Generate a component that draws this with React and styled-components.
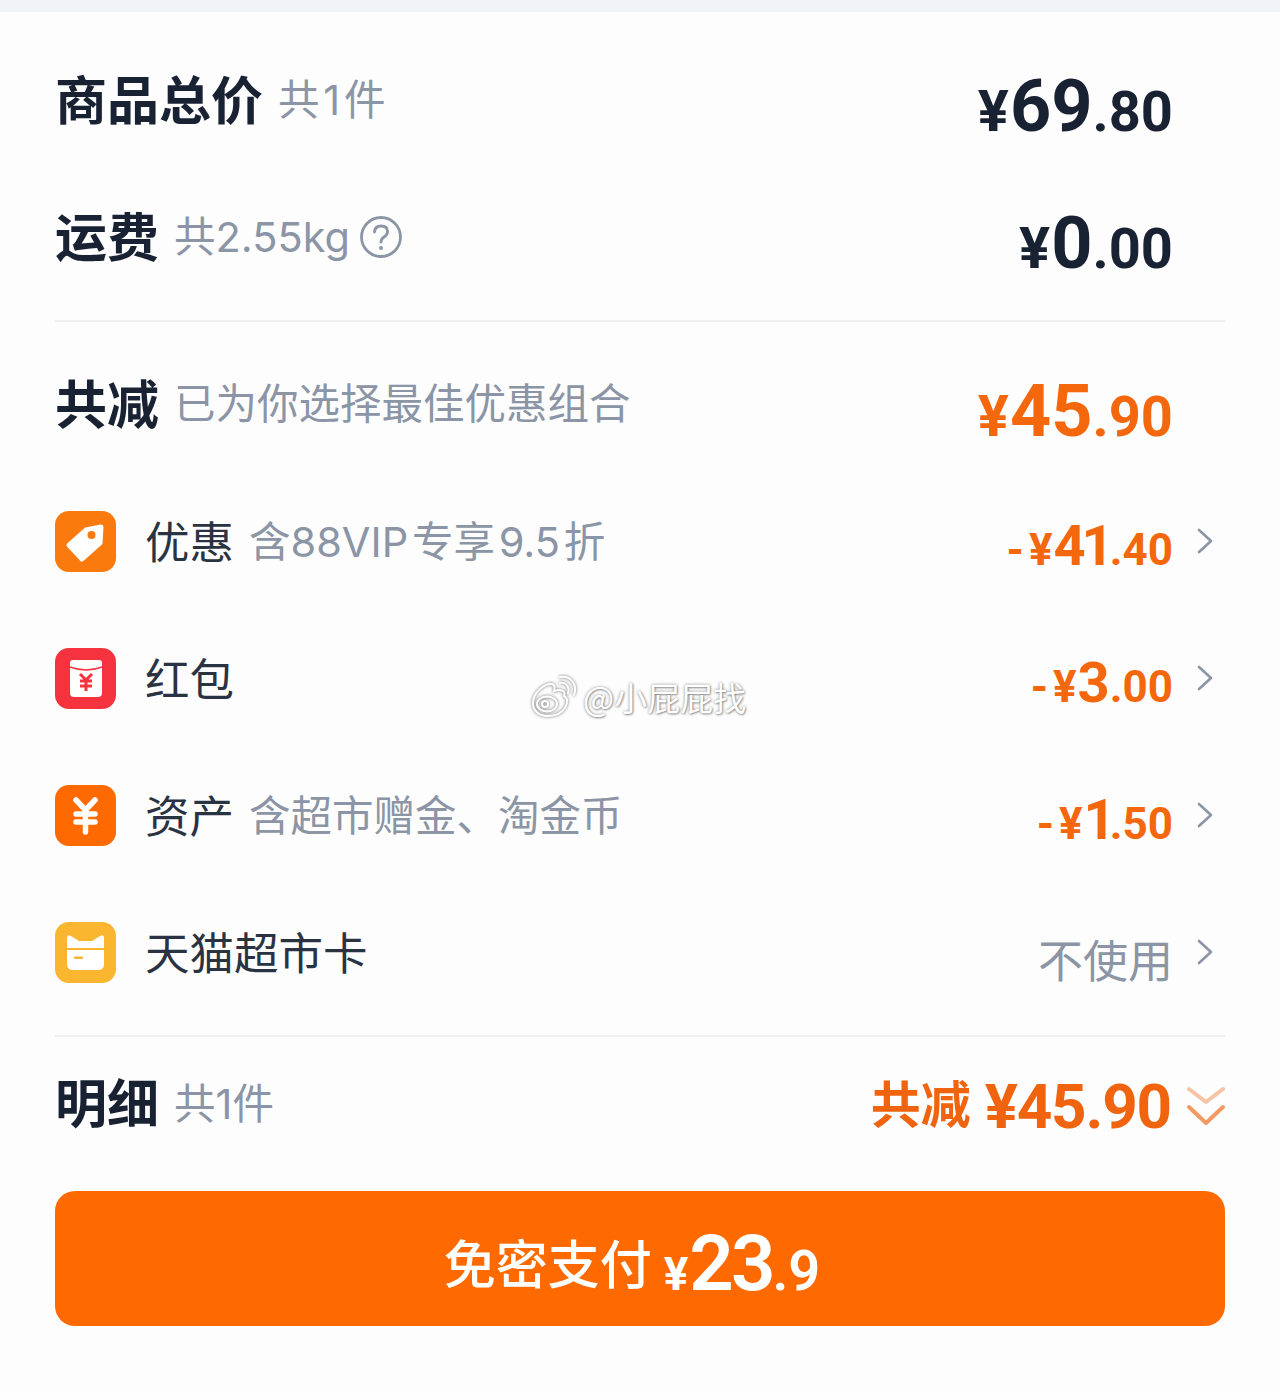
import React from 'react';
import styled, { createGlobalStyle } from 'styled-components';

const Global = createGlobalStyle`
    html, body { margin: 0; padding: 0; background: #fdfdfd; }
    body { font-family: "Inter", "Noto Sans CJK SC", sans-serif; }
`
const CJK = `"Noto Sans CJK SC", sans-serif`
const LATIN = `"Inter", "Noto Sans CJK SC", sans-serif`
const NUM = `"Roboto", "Noto Sans CJK SC", sans-serif`

const Page = styled.div`
    position: relative;
    width: 1280px;
    height: 1393px;
    overflow: hidden;
    background: #fdfdfd;
`
const TopStrip = styled.div`
    height: 12px;
    background: #f1f3f6;
`
const Body = styled.div`
    padding: 17px 55px 0;
    display: flex;
    flex-direction: column;
`
const Row = styled.div`
    height: ${p => p.$h || 137}px;
    margin-bottom: ${p => p.$after || 0}px;
    display: flex;
    align-items: center;
    justify-content: space-between;
`
const Left = styled.div`
    display: flex;
    align-items: center;
`
const Title = styled.span`
    font-family: ${CJK};
    font-size: 52px;
    font-weight: 700;
    color: #182233;
    line-height: 60px;
`
const Note = styled.span`
    font-family: ${LATIN};
    font-size: 41.5px;
    font-weight: 400;
    color: #8b95a5;
    margin: 5px 0 0 15px;
    line-height: 60px;
    display: flex;
    align-items: center;
`
const LabelGroup = styled.div`
    display: flex;
    align-items: center;
    margin-bottom: 4px;
`
const Label = styled.span`
    font-family: ${CJK};
    font-size: 44.5px;
    color: #2a3342;
    margin-left: 29px;
    line-height: 60px;
`
const Tile = styled.div`
    width: 61px;
    height: 61px;
    border-radius: 14px;
    background: ${p => p.$bg};
    display: flex;
    align-items: center;
    justify-content: center;
`
const Right = styled.div`
    display: flex;
    align-items: center;
    padding-right: 52px;
`
const Amount = styled.div`
    font-family: ${NUM};
    font-weight: 700;
    color: ${p => p.$color};
    display: flex;
    align-items: baseline;
    line-height: 70px;
    margin-top: ${p => p.$drop}px;
`
const Big = styled.span`
    font-size: ${p => p.$size}px;
    font-weight: ${p => p.$weight || 700};
    letter-spacing: ${p => p.$track || 0}px;
`
const Small = styled.span`
    font-size: ${p => p.$size}px;
    font-weight: ${p => p.$weight || 700};
    margin-right: ${p => p.$gap || 0}px;
`
const Yen = styled.span`
    font-size: ${p => p.$size}px;
    font-weight: 700;
    margin-right: 1px;
`
const Arrow = styled.svg`
    position: absolute;
    right: 66px;
`
const Divider = styled.div`
    height: 2px;
    background: #eef0f2;
    margin: ${p => p.$m};
`
const Unused = styled.span`
    font-family: ${CJK};
    font-size: 45px;
    color: #8b95a5;
    margin-top: 12px;
`
const OrangeSum = styled.div`
    display: flex;
    align-items: center;
    color: #f0640f;
`
const SumLabel = styled.span`
    font-family: ${CJK};
    font-size: 50px;
    font-weight: 700;
`
const SumValue = styled.span`
    font-family: ${NUM};
    font-size: 62px;
    font-weight: 700;
    letter-spacing: -1.2px;
    margin-left: 14px;
    margin-top: 10px;
`
const ChevronWrap = styled.svg`
    margin-left: 16px;
    margin-top: 10px;
`
const PayButton = styled.div`
    box-sizing: border-box;
    height: 135px;
    border-radius: 20px;
    background: #fe6a00;
    color: #fff;
    display: flex;
    align-items: center;
    justify-content: center;
    margin-top: 26px;
    padding: 5px 16px 0 0;
`
const PayText = styled.span`
    font-family: ${CJK};
    font-size: 52px;
    font-weight: 500;
`
const PayAmount = styled.span`
    font-family: ${NUM};
    font-weight: 500;
    display: flex;
    align-items: baseline;
    margin: 4px 0 0 12px;
`
const Watermark = styled.div`
    position: absolute;
    left: 530px;
    top: 673px;
    display: flex;
    align-items: center;
    gap: 5px;
    font-family: ${CJK};
    font-size: 33px;
    line-height: 48px;
    color: #fff;
    text-shadow: 0 0 3px rgba(0,0,0,0.45), 1px 1px 2px rgba(0,0,0,0.3);
`
const HelpIcon = styled.svg`
    margin-left: 10px;
`
const WeiboIcon = styled.svg`
    filter: drop-shadow(0 0 1.5px rgba(0,0,0,0.6));
`
const ORANGE = '#f5670c'
const DARK = '#182233'

const Chevron = () => (
    <Arrow width="18" height="30" viewBox="0 0 18 30" fill="none">
        <path d="M3 3 L15 14 L3 25" stroke="#8b95a5" strokeWidth="2.6" strokeLinecap="round" strokeLinejoin="round" />
    </Arrow>
)

const Price = ({ big, small, color, minus, sizes, drop, track }) => (
    <Amount $color={color} $drop={drop}>
        {minus && <Small $size={sizes[2]} $gap={5}>-</Small>}
        <Yen $size={sizes[2]}>¥</Yen>
        <Big $size={sizes[0]} $track={track}>{big}</Big>
        <Small $size={sizes[1]}>{small}</Small>
    </Amount>
)

const TagIcon = () => (
    <svg width="61" height="61" viewBox="0 0 61 61">
        <path d="M14 34 L31 19 L46 16 L45 32 L27 48 Z" fill="#fff" stroke="#fff" strokeWidth="5" strokeLinejoin="round" />
        <circle cx="36.5" cy="24" r="4" fill="#fa7a0e" />
    </svg>
)
const PacketIcon = () => (
    <svg width="61" height="61" viewBox="0 0 61 61">
        <path d="M15 15 Q15 12 18 12 L44 12 Q47 12 47 15 L47 45 Q47 49 43 49 L19 49 Q15 49 15 45 Z" fill="#fff" />
        <path d="M15 19 Q31 25 47 19" fill="none" stroke="#f5333f" strokeWidth="1.5" />
        <path d="M25 26 L31 32 L37 26 M25 33 H37 M25 38 H37 M31 32 V43" fill="none" stroke="#f5333f" strokeWidth="3" />
    </svg>
)
const YenIcon = () => (
    <svg width="61" height="61" viewBox="0 0 61 61">
        <path d="M21 15 L30.5 25 L40 15 M21 29 H40 M21 37 H40 M30.5 25 V47" fill="none" stroke="#fff" strokeWidth="5.5" strokeLinecap="round" strokeLinejoin="round" />
    </svg>
)
const CardIcon = () => (
    <svg width="61" height="61" viewBox="0 0 61 61">
        <path d="M12 16 Q12 12 16 14 L24 19 H37 L45 14 Q49 12 49 16 V26 H12 Z" fill="#fff" />
        <path d="M12 28 H49 V42 Q49 48 43 48 H18 Q12 48 12 42 Z" fill="#fff" />
        <rect x="19" y="34.5" width="9" height="2.5" rx="1" fill="#f9b62e" />
    </svg>
)
const Help = () => (
    <HelpIcon width="42" height="42" viewBox="0 0 42 42" fill="none">
        <circle cx="21" cy="21" r="19.5" stroke="#8b95a5" strokeWidth="2.8" />
        <path d="M14.5 16 Q15 10 21 10 Q27.5 10 27.5 15.5 Q27.5 19 24 21 Q21 23 21 26" stroke="#8b95a5" strokeWidth="2.8" strokeLinecap="round" />
        <circle cx="21" cy="32" r="2" fill="#8b95a5" />
    </HelpIcon>
)
const Weibo = () => (
    <WeiboIcon width="48" height="44" viewBox="0 0 48 44" fill="none" stroke="#fff" strokeWidth="2">
        <path d="M3 28 C3 18 14 8 22 9 C25 10 25 13 24 16 C30 14 36 15 34 21 C41 24 36 41 18 41 C9 41 3 36 3 28 Z" />
        <ellipse cx="17" cy="29" rx="10" ry="7.5" />
        <circle cx="15" cy="29" r="3" />
        <path d="M30 8 C36 7 40 12 38 18 M30 2 C40 0 48 9 44 20" strokeLinecap="round" />
    </WeiboIcon>
)
const DoubleChevron = () => (
    <ChevronWrap width="38" height="40" viewBox="0 0 38 40" fill="none">
        <path d="M2 3 L19 16 L36 3" stroke="#f5c4a4" strokeWidth="4" strokeLinecap="round" strokeLinejoin="round" />
        <path d="M2 21 L19 37 L36 21" stroke="#f29a62" strokeWidth="4" strokeLinecap="round" strokeLinejoin="round" />
    </ChevronWrap>
)

const discounts = [
    { icon: <TagIcon />, bg: '#fa7a0e', label: '优惠', note: '含88VIP\u200a专享\u200a9.5\u200a折', big: '41', small: '.40', track: -4 },
    { icon: <PacketIcon />, bg: '#f5333f', label: '红包', big: '3', small: '.00', track: 0 },
    { icon: <YenIcon />, bg: '#fe6a00', label: '资产', note: '含超市赠金、淘金币', big: '1', small: '.50', track: -6 },
]
const mainSizes = [72, 56, 58]
const subSizes = [56, 44, 44]

export default function App() {
    return (
        <Page>
            <Global />
            <TopStrip />
            <Body>
                <Row>
                    <Left><Title>商品总价</Title><Note>共{'\u200a'}1{'\u200a'}件</Note></Left>
                    <Right><Price big="69" small=".80" color={DARK} sizes={mainSizes} drop={23} /></Right>
                </Row>
                <Row>
                    <Left><Title>运费</Title><Note>共2.55kg<Help /></Note></Left>
                    <Right><Price big="0" small=".00" color={DARK} sizes={mainSizes} drop={23} /></Right>
                </Row>
                <Divider $m="17px 0 11px" />
                <Row $after={3}>
                    <Left><Title>共减</Title><Note>已为你选择最佳优惠组合</Note></Left>
                    <Right><Price big="45" small=".90" color={ORANGE} sizes={mainSizes} drop={25} /></Right>
                </Row>
                {discounts.map((d) => (
                    <Row key={d.label}>
                        <Left>
                            <Tile $bg={d.bg}>{d.icon}</Tile>
                            <LabelGroup>
                                <Label>{d.label}</Label>
                                {d.note && <Note>{d.note}</Note>}
                            </LabelGroup>
                        </Left>
                        <Right>
                            <Price minus big={d.big} small={d.small} track={d.track} color={ORANGE} sizes={subSizes} drop={13} />
                            <Chevron />
                        </Right>
                    </Row>
                ))}
                <Row>
                    <Left>
                        <Tile $bg="#f9b62e"><CardIcon /></Tile>
                        <LabelGroup><Label>天猫超市卡</Label></LabelGroup>
                    </Left>
                    <Right>
                        <Unused>不使用</Unused>
                        <Chevron />
                    </Right>
                </Row>
                <Divider $m="14px 0 0" />
                <Row $h={128}>
                    <Left><Title>明细</Title><Note>共1件</Note></Left>
                    <OrangeSum>
                        <SumLabel>共减</SumLabel>
                        <SumValue>¥45.90</SumValue>
                        <DoubleChevron />
                    </OrangeSum>
                </Row>
                <PayButton>
                    <PayText>免密支付</PayText>
                    <PayAmount>
                        <Yen $size={46}>¥</Yen>
                        <Big $size={78} $track={-3} $weight={600}>23</Big>
                        <Small $size={56} $weight={600}>.9</Small>
                    </PayAmount>
                </PayButton>
            </Body>
            <Watermark><Weibo />@小屁屁找</Watermark>
        </Page>
    );
}
